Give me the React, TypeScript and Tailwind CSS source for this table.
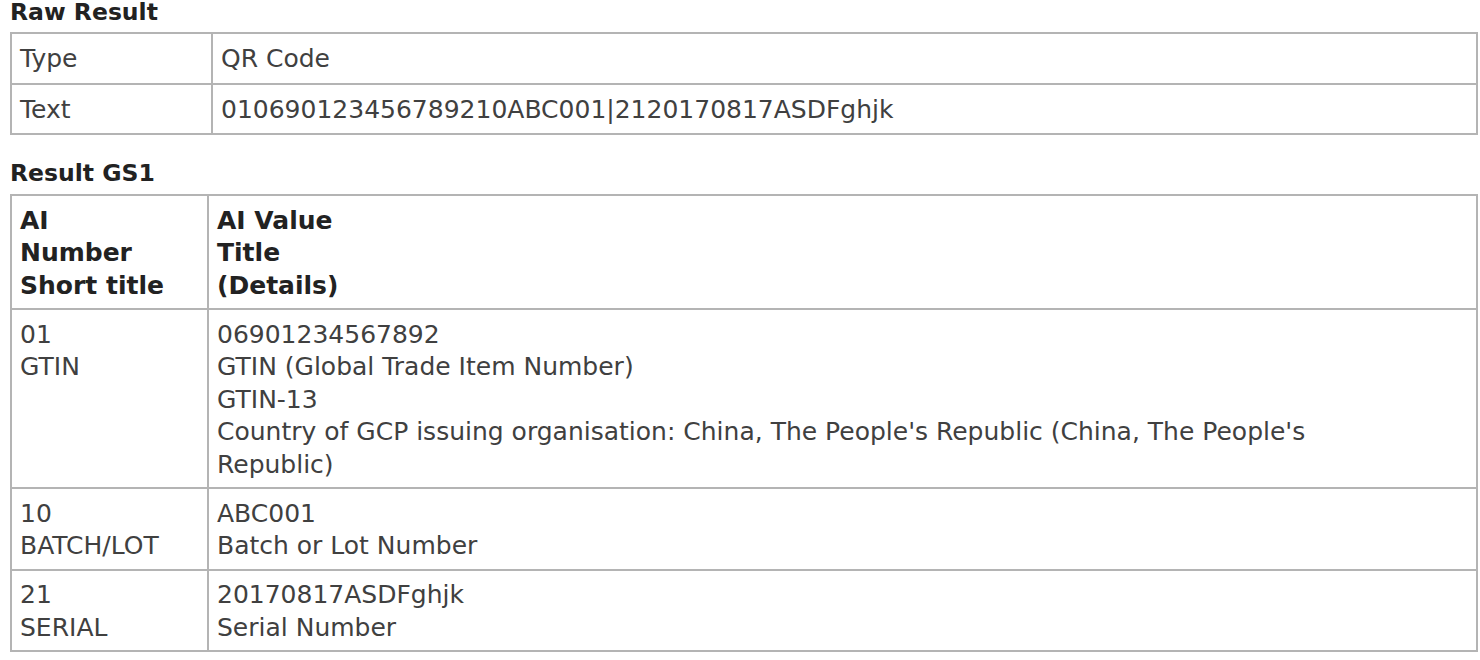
import React from "react";

const cell = "border-2 border-[#b4b4b4] pl-[8px] pr-[9px] pt-[8.5px] pb-[6px] align-top";
const cell1 = "border-2 border-[#b4b4b4] pl-[8px] pr-[9px] pt-[9px] pb-[7px] align-top";

export default function App() {
  return (
    <div className="bg-white min-h-[660px] w-[1480px] pl-[10px] pr-[2px] text-[25px] leading-[32.5px] text-[#404040]" style={{ fontFamily: '"DejaVu Sans", Verdana, sans-serif' }}>
      <div className="font-bold text-[#222] leading-[24px] text-[23.5px]">Raw Result</div>
      <table className="mt-[8px] w-full border-collapse border-2 border-[#b4b4b4]">
        <tbody>
          <tr>
            <td className={`${cell1} w-[201px]`}>Type</td>
            <td className={cell1}>QR Code</td>
          </tr>
          <tr>
            <td className={cell1}>Text</td>
            <td className={cell1}>010690123456789210ABC001|2120170817ASDFghjk</td>
          </tr>
        </tbody>
      </table>
      <div className="mt-[26px] font-bold text-[#222] leading-[24px] text-[23.5px]">Result GS1</div>
      <table className="mt-[9px] w-full border-collapse border-2 border-[#b4b4b4]">
        <tbody>
          <tr className="font-bold text-[#222]">
            <td className={`${cell} w-[197px]`}>
              AI<br />Number<br />Short title
            </td>
            <td className={cell}>
              AI Value<br />Title<br />(Details)
            </td>
          </tr>
          <tr>
            <td className={cell}>01<br />GTIN</td>
            <td className={cell}>
              06901234567892<br />GTIN (Global Trade Item Number)<br />GTIN-13<br />
              Country of GCP issuing organisation: China, The People's Republic (China, The People's
              <br />
              Republic)
            </td>
          </tr>
          <tr>
            <td className={cell}>10<br />BATCH/LOT</td>
            <td className={cell}>ABC001<br />Batch or Lot Number</td>
          </tr>
          <tr>
            <td className={cell}>21<br />SERIAL</td>
            <td className={cell}>20170817ASDFghjk<br />Serial Number</td>
          </tr>
        </tbody>
      </table>
    </div>
  );
}
